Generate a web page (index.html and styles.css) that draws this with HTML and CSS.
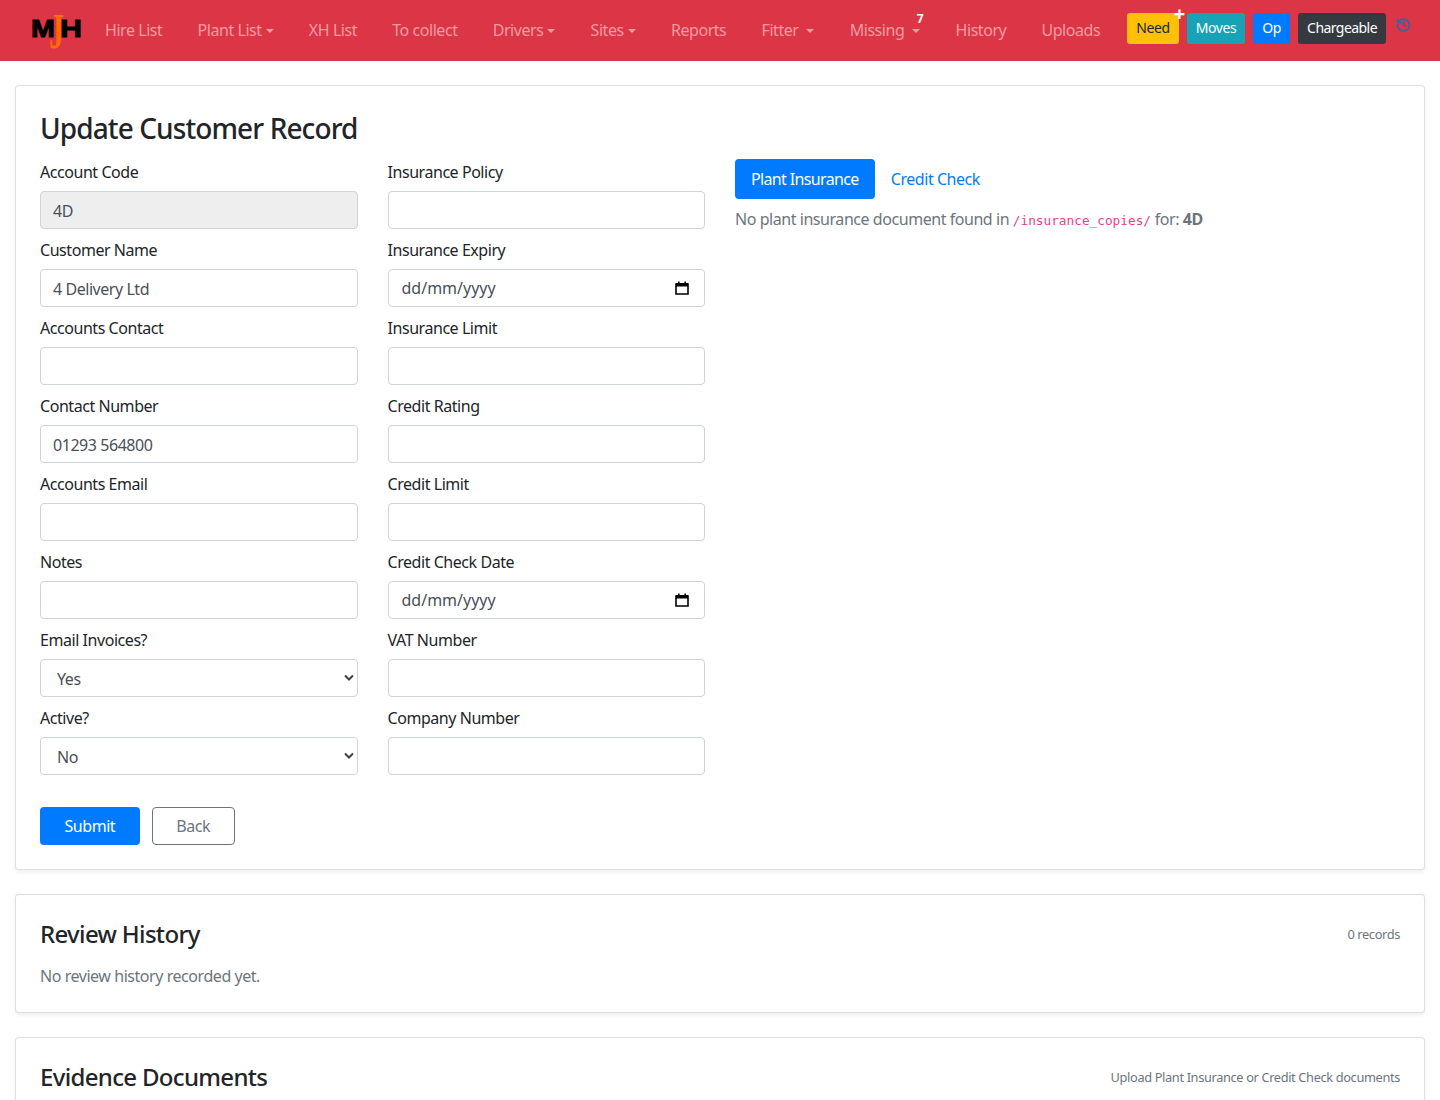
FILE: index.html
```html
<!DOCTYPE html>
<html lang="en">
<head>
    <meta charset="UTF-8">
    <meta name="viewport" content="width=device-width, initial-scale=1.0">
    <title>Update Customer Record</title>
    <link rel="stylesheet" href="styles.css">
</head>
<body>
    <nav class="navbar">
        <a class="logo" href="#">
            <svg width="52" height="40" viewBox="0 0 52 40">
                <text class="logo-black" x="0" y="26" textLength="23" lengthAdjust="spacingAndGlyphs">M</text>
                <text class="logo-black" x="29" y="26" textLength="21" lengthAdjust="spacingAndGlyphs">H</text>
                <text class="logo-orange" x="30" y="37" transform="scale(0.6 1)">J</text>
            </svg>
        </a>
        <ul class="nav-links">
            <li><a href="#">Hire List</a></li>
            <li><a class="caret" href="#">Plant List</a></li>
            <li><a href="#">XH List</a></li>
            <li><a href="#">To collect</a></li>
            <li><a class="caret" href="#">Drivers</a></li>
            <li><a class="caret" href="#">Sites</a></li>
            <li><a href="#">Reports</a></li>
            <li><a class="caret caret-wide" href="#">Fitter</a></li>
            <li class="has-count"><a class="caret caret-wide" href="#">Missing</a><span class="count">7</span></li>
            <li><a href="#">History</a></li>
            <li><a href="#">Uploads</a></li>
        </ul>
        <div class="nav-buttons">
            <a class="btn-sm btn-need" href="#">Need<span class="plus">+</span></a>
            <a class="btn-sm btn-moves" href="#">Moves</a>
            <a class="btn-sm btn-op" href="#">Op</a>
            <a class="btn-sm btn-charge" href="#">Chargeable</a>
        </div>
        <a class="history-icon" href="#">
            <svg width="15" height="15" viewBox="0 0 24 24" fill="none" stroke="#3563a8" stroke-width="2.6" stroke-linecap="round" stroke-linejoin="round">
                <path d="M4.2 7.5A9.5 9.5 0 1 1 2.5 12"/>
                <path d="M2.5 3.5v5h5"/>
                <path d="M12 7v5.5l3.5 2"/>
            </svg>
        </a>
    </nav>

    <div class="page">
        <section class="card">
            <h2 class="page-title">Update Customer Record</h2>
            <div class="form-layout">
                <div class="form-col">
                    <div class="field">
                        <label>Account Code</label>
                        <input class="input" type="text" value="4D" disabled>
                    </div>
                    <div class="field">
                        <label>Customer Name</label>
                        <input class="input" type="text" value="4 Delivery Ltd">
                    </div>
                    <div class="field">
                        <label>Accounts Contact</label>
                        <input class="input" type="text">
                    </div>
                    <div class="field">
                        <label>Contact Number</label>
                        <input class="input" type="text" value="01293 564800">
                    </div>
                    <div class="field">
                        <label>Accounts Email</label>
                        <input class="input" type="text">
                    </div>
                    <div class="field">
                        <label>Notes</label>
                        <input class="input" type="text">
                    </div>
                    <div class="field">
                        <label>Email Invoices?</label>
                        <div class="select-wrap">
                            <select class="input select"><option>Yes</option><option>No</option></select>
                            <svg class="chevron" width="10" height="8" viewBox="0 0 10 8" fill="none" stroke="#3c4248" stroke-width="2"><path d="M1 1.5l4 4 4-4"/></svg>
                        </div>
                    </div>
                    <div class="field">
                        <label>Active?</label>
                        <div class="select-wrap">
                            <select class="input select"><option>No</option><option>Yes</option></select>
                            <svg class="chevron" width="10" height="8" viewBox="0 0 10 8" fill="none" stroke="#3c4248" stroke-width="2"><path d="M1 1.5l4 4 4-4"/></svg>
                        </div>
                    </div>
                </div>

                <div class="form-col">
                    <div class="field">
                        <label>Insurance Policy</label>
                        <input class="input" type="text">
                    </div>
                    <div class="field">
                        <label>Insurance Expiry</label>
                        <div class="input date-input">
                            <span>dd/mm/yyyy</span>
                            <svg width="14" height="14" viewBox="0 0 14 14"><path d="M1 3h12v10H1z" fill="none" stroke="#000" stroke-width="1.6"/><path d="M1 2h12v3.5H1zM3 .5h1.6V3H3zM9.4.5H11V3H9.4z"/></svg>
                        </div>
                    </div>
                    <div class="field">
                        <label>Insurance Limit</label>
                        <input class="input" type="text">
                    </div>
                    <div class="field">
                        <label>Credit Rating</label>
                        <input class="input" type="text">
                    </div>
                    <div class="field">
                        <label>Credit Limit</label>
                        <input class="input" type="text">
                    </div>
                    <div class="field">
                        <label>Credit Check Date</label>
                        <div class="input date-input">
                            <span>dd/mm/yyyy</span>
                            <svg width="14" height="14" viewBox="0 0 14 14"><path d="M1 3h12v10H1z" fill="none" stroke="#000" stroke-width="1.6"/><path d="M1 2h12v3.5H1zM3 .5h1.6V3H3zM9.4.5H11V3H9.4z"/></svg>
                        </div>
                    </div>
                    <div class="field">
                        <label>VAT Number</label>
                        <input class="input" type="text">
                    </div>
                    <div class="field">
                        <label>Company Number</label>
                        <input class="input" type="text">
                    </div>
                </div>

                <div class="doc-col">
                    <div class="pills">
                        <a class="pill active" href="#">Plant Insurance</a>
                        <a class="pill" href="#">Credit Check</a>
                    </div>
                    <p class="doc-note">No plant insurance document found in <code>/insurance_copies/</code> for: <strong>4D</strong></p>
                </div>
            </div>
            <div class="form-actions">
                <button class="btn btn-primary">Submit</button>
                <a class="btn btn-outline" href="#">Back</a>
            </div>
        </section>

        <section class="card card-small">
            <div class="card-head">
                <h4>Review History</h4>
                <small>0 records</small>
            </div>
            <p class="muted">No review history recorded yet.</p>
        </section>

        <section class="card card-small">
            <div class="card-head">
                <h4>Evidence Documents</h4>
                <small>Upload Plant Insurance or Credit Check documents</small>
            </div>
        </section>
    </div>
</body>
</html>
```

FILE: styles.css
```css
* {
    box-sizing: border-box;
    letter-spacing: -0.028em;
}

html, body {
    height: 1100px;
    overflow: hidden;
}

body {
    margin: 0;
    font-family: "Noto Sans", "Open Sans", Arial, sans-serif;
    font-size: 16px;
    line-height: 24px;
    color: #212529;
    background-color: #fff;
}

a {
    text-decoration: none;
}

/* top bar */
.navbar {
    display: flex;
    align-items: center;
    height: 61px;
    padding: 0 16px 0 31px;
    background-color: #dc3545;
    white-space: nowrap;
}

.logo {
    display: block;
    width: 50px;
    height: 40px;
    margin-top: 1px;
}

.logo-black {
    font-family: "Liberation Sans", Arial, sans-serif;
    font-size: 24px;
    font-weight: bold;
    fill: #000;
    stroke: #000;
    stroke-width: 1;
}

.logo-orange {
    font-family: "Liberation Serif", serif;
    font-size: 50px;
    font-weight: bold;
    fill: #ff6a00;
}

.nav-links {
    display: flex;
    gap: 35.2px;
    list-style: none;
    margin: -2px 0 0 24px;
    padding: 0;
}

.nav-links li {
    position: relative;
}

.nav-links a {
    color: rgba(255, 255, 255, 0.5);
}

.caret::after {
    content: "";
    display: inline-block;
    margin-left: 4px;
    vertical-align: 3px;
    border-top: 4.8px solid;
    border-left: 4.8px solid transparent;
    border-right: 4.8px solid transparent;
}

.caret-wide::after {
    margin-left: 8px;
}

.count {
    position: absolute;
    top: -11px;
    right: -3px;
    font-size: 12px;
    font-weight: bold;
    color: #fff;
}

.nav-buttons {
    display: flex;
    gap: 8px;
    margin: -5px 0 0 27px;
}

.btn-sm {
    position: relative;
    height: 31px;
    padding: 3px 9px;
    border-radius: 3px;
    font-size: 14px;
    line-height: 24px;
    color: #fff;
}

.btn-need {
    background-color: #ffc107;
    color: #212529;
}

.btn-moves {
    background-color: #17a2b8;
}

.btn-op {
    background-color: #007bff;
}

.btn-charge {
    background-color: #343a40;
    letter-spacing: -0.04em;
}

.plus {
    position: absolute;
    top: -11px;
    right: -6px;
    font-size: 20px;
    font-weight: bold;
    color: #fff;
}

.history-icon {
    display: block;
    height: 15px;
    margin: -13px 0 0 10px;
    line-height: 15px;
}

/* cards */
.page {
    display: flex;
    flex-direction: column;
    gap: 24px;
    padding: 24px 15px 0;
}

.card {
    padding: 24px;
    background-color: #fff;
    border: 1px solid rgba(0, 0, 0, 0.125);
    border-radius: 4px;
    box-shadow: 0 2px 4px rgba(0, 0, 0, 0.075);
}

.page-title {
    margin: -1px 0 12px;
    font-size: 28px;
    line-height: 38px;
    font-weight: 500;
    letter-spacing: -0.032em;
}

.form-layout {
    display: grid;
    grid-template-columns: 317.5px 317.5px 1fr;
    gap: 30px;
}

.form-col {
    display: flex;
    flex-direction: column;
    gap: 8px;
}

.field label {
    display: block;
    padding-top: 1px;
    margin-bottom: 7px;
}

.input {
    display: block;
    width: 100%;
    height: 38px;
    padding: 7px 12px 5px;
    font-family: inherit;
    font-size: 16px;
    line-height: 24px;
    color: #495057;
    background-color: #fff;
    border: 1px solid #ced4da;
    border-radius: 4px;
}

.input:disabled {
    background-color: #eee;
    opacity: 1;
}

.select-wrap {
    position: relative;
}

.select {
    padding-left: 16px;
    appearance: none;
    -webkit-appearance: none;
}

.chevron {
    position: absolute;
    top: 15px;
    right: 4px;
}

.date-input {
    display: flex;
    align-items: center;
    justify-content: space-between;
    padding: 6px 15px 6px 13px;
}

.date-input span {
    letter-spacing: 0;
}

.pills {
    display: flex;
    margin-bottom: 8px;
}

.pill {
    padding: 8px 16px;
    color: #007bff;
    border-radius: 4px;
}

.pill.active {
    color: #fff;
    background-color: #007bff;
    letter-spacing: -0.04em;
}

.doc-note {
    margin: 0;
    color: #6c757d;
}

code {
    font-family: "DejaVu Sans Mono", "Liberation Mono", monospace;
    font-size: 12.75px;
    letter-spacing: 0;
    color: #e83e8c;
}

.form-actions {
    display: flex;
    gap: 12px;
    margin-top: 32px;
}

.btn {
    height: 38px;
    padding: 6px 23.5px;
    font-family: inherit;
    font-size: 16px;
    line-height: 24px;
    border-radius: 4px;
    border: 1px solid transparent;
}

.btn-primary {
    color: #fff;
    background-color: #007bff;
}

.btn-outline {
    color: #6c757d;
    border-color: #6c757d;
}

.card-head {
    display: flex;
    align-items: center;
    justify-content: space-between;
    margin-bottom: 16px;
}

.card-head h4 {
    margin: 0;
    font-size: 24px;
    line-height: 29px;
    font-weight: 500;
}

.card-head small {
    font-size: 12.8px;
    color: #6c757d;
}

.muted {
    margin: 0;
    color: #6c757d;
}

.card-small:last-child {
    height: 200px;
}
```
